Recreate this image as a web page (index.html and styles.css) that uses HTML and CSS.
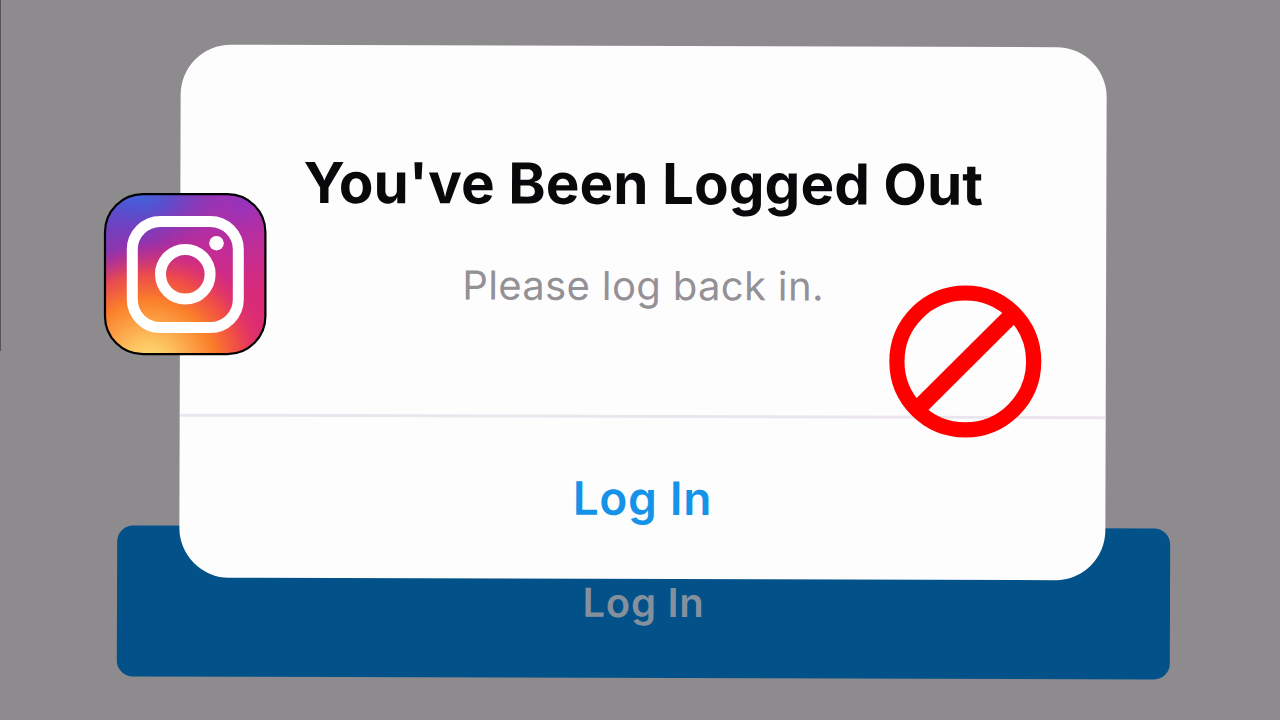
FILE: index.html
```html
<!DOCTYPE html>
<html lang="en">
<head>
    <meta charset="UTF-8">
    <meta name="viewport" content="width=device-width, initial-scale=1.0">
    <title>Log In</title>
    <link rel="stylesheet" href="styles.css">
</head>
<body>
    <div class="screen">
        <button class="login-button">Log In</button>
        <div class="edge"></div>

        <div class="dialog">
            <div class="dialog-body">
                <h1>You've Been Logged Out</h1>
                <p>Please log back in.</p>
            </div>
            <button class="dialog-action">Log In</button>
        </div>

        <!-- app icon -->
        <svg class="app-icon" viewBox="0 0 164 164">
            <defs>
                <linearGradient id="base" x1="0" y1="0" x2="0.8" y2="1">
                    <stop offset="0" stop-color="#5a48c8"/>
                    <stop offset="0.3" stop-color="#9631aa"/>
                    <stop offset="0.55" stop-color="#cf2a88"/>
                    <stop offset="1" stop-color="#dc2c70"/>
                </linearGradient>
                <radialGradient id="warm" gradientUnits="userSpaceOnUse" cx="0" cy="0" r="1" gradientTransform="translate(46 174) rotate(10) scale(122 122)">
                    <stop offset="0" stop-color="#ffe07a"/>
                    <stop offset="0.18" stop-color="#fdc864"/>
                    <stop offset="0.54" stop-color="#fb7f2a"/>
                    <stop offset="0.75" stop-color="#f4513f" stop-opacity="0.85"/>
                    <stop offset="1" stop-color="#e02c70" stop-opacity="0"/>
                </radialGradient>
                <radialGradient id="blue" gradientUnits="userSpaceOnUse" cx="0" cy="0" r="1" gradientTransform="translate(36 0) scale(90 58)">
                    <stop offset="0" stop-color="#3f68e0"/>
                    <stop offset="0.35" stop-color="#4d55d4" stop-opacity="0.8"/>
                    <stop offset="1" stop-color="#7a3cc4" stop-opacity="0"/>
                </radialGradient>
                <radialGradient id="violet" gradientUnits="userSpaceOnUse" cx="140" cy="5" r="95">
                    <stop offset="0" stop-color="#9234c0"/>
                    <stop offset="1" stop-color="#c02ca0" stop-opacity="0"/>
                </radialGradient>
                <clipPath id="shape"><rect x="2" y="2" width="160" height="160" rx="38"/></clipPath>
            </defs>
            <g clip-path="url(#shape)">
                <rect width="164" height="164" fill="url(#base)"/>
                <rect width="164" height="164" fill="url(#violet)"/>
                <rect width="164" height="164" fill="url(#blue)"/>
                <rect width="164" height="164" fill="url(#warm)"/>
            </g>
            <rect x="2" y="2.2" width="160.4" height="160" rx="38" fill="none" stroke="#000" stroke-width="2.2"/>
            <rect x="29.3" y="29.5" width="106" height="106" rx="28" fill="none" stroke="#fff" stroke-width="11"/>
            <circle cx="82.3" cy="82.3" r="24.8" fill="none" stroke="#fff" stroke-width="11"/>
            <circle cx="113.5" cy="51.2" r="7.3" fill="#fff"/>
        </svg>

        <!-- prohibition sign -->
        <svg class="ban-icon" viewBox="0 0 154 154">
            <circle cx="77.3" cy="77.4" r="68.4" fill="none" stroke="#fe0000" stroke-width="15.2"/>
            <path d="M29 125.5L125.5 29.5" stroke="#fe0000" stroke-width="16.6"/>
        </svg>
    </div>
</body>
</html>
```
FILE: styles.css
```css
* {
    box-sizing: border-box;
}
body {
    margin: 0;
    font-family: Inter, "Liberation Sans", sans-serif;
}
button {
    font-family: inherit;
    border: none;
    padding: 0;
    cursor: pointer;
}
.screen {
    position: relative;
    display: flex;
    flex-direction: column;
    justify-content: flex-end;
    align-items: center;
    height: 720px;
    padding: 0 0 42px 6px;
    background-color: #8e8b8e;
    overflow: hidden;
}
.login-button {
    width: 1053px;
    height: 151px;
    border-radius: 16px;
    background-color: #035189;
    color: #85909f;
    font-size: 40px;
    font-weight: 600;
    letter-spacing: 0.7px;
    transform: rotate(0.17deg);
}
.edge {
    position: absolute;
    left: 0;
    top: 0;
    width: 1px;
    height: 351px;
    background-color: #555356;
}
.dialog {
    position: absolute;
    left: 180px;
    top: 45.5px;
    display: flex;
    flex-direction: column;
    width: 926px;
    height: 533px;
    border-radius: 50px;
    background-color: #fefdfe;
    transform: rotate(0.17deg);
    overflow: hidden;
}
.dialog-body {
    height: 372px;
    padding-top: 103px;
    border-bottom: 3px solid #ebe6ed;
    text-align: center;
    white-space: nowrap;
}
.dialog-body h1 {
    margin: 0;
    color: #09090c;
    font-size: 56.5px;
    line-height: 70px;
    font-weight: 700;
    letter-spacing: 0.1px;
}
.dialog-body p {
    margin: 41px 0 0;
    color: #939196;
    font-size: 40px;
    line-height: 52px;
    letter-spacing: 0.35px;
}
.dialog-action {
    flex: 1;
    padding-bottom: 2px;
    background: none;
    color: #1593e8;
    font-size: 46px;
    font-weight: 600;
    letter-spacing: 0.7px;
}
.app-icon {
    position: absolute;
    left: 103px;
    top: 192px;
    width: 164px;
    height: 164px;
}
.ban-icon {
    position: absolute;
    left: 888px;
    top: 284px;
    width: 154px;
    height: 154px;
}
```
